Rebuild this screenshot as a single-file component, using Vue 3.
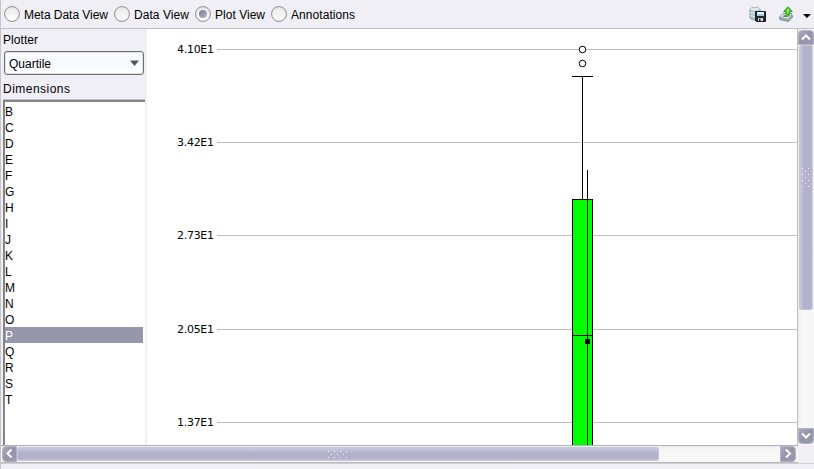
<script setup>
import { ref } from 'vue'

const views = ['Meta Data View', 'Data View', 'Plot View', 'Annotations']
const view = ref('Plot View')
const dimensions = 'BCDEFGHIJKLMNOPQRST'.split('')
const selected = ref('P')
const ticks = [
  { y: 49, label: '4.10E1' },
  { y: 142, label: '3.42E1' },
  { y: 235, label: '2.73E1' },
  { y: 329, label: '2.05E1' },
  { y: 422, label: '1.37E1' }
]
</script>

<template>
  <div class="window">
    <header class="toolbar">
      <button v-for="(v, i) in views" :key="v" :class="['view', 'view-' + i]" @click="view = v">
        <span class="radio"><span v-if="view === v" class="dot"></span></span>
        <svg class="view-label" width="94" height="18"><text x="0" y="13" :textLength="[84, 55, 50, 64][i]">{{ v }}</text></svg>
      </button>
      <div class="actions">
        <svg class="save" width="18" height="18" viewBox="0 0 18 18">
          <path d="M1 3.500Q1 1.500 6 1.500T11 3.500V12Q10 14 6 14T1 12Z" fill="#b4c6d0" stroke="#8c9ea8" />
          <ellipse cx="6" cy="3" rx="4.500" ry="1.500" fill="#dfe9ee" />
          <path d="M1.500 6.500Q5 8 10.500 6.500M1.500 9.500Q4 11 7 10.500" fill="none" stroke="#e4edf1" />
          <path d="M6.500 5.500H16.500V15.500H7.500L6.500 14.500Z" fill="#242b35" stroke="#161c24" />
          <path d="M8 6H15V10H8Z" fill="#a9cbe8" /><path d="M8 6H15V8H8Z" fill="#e9f3fa" />
          <path d="M9 12H14V15H9Z" fill="#d8dadd" /><path d="M10 12.500H11.500V15H10Z" fill="#273039" />
        </svg>
        <svg class="export" width="16" height="17" viewBox="0 0 16 17">
          <path d="M1.500 11L5 7.500H13.500L14.500 11L10.500 15.500L2 13.500Z" fill="#9fadb7" stroke="#7b8c97" />
          <path d="M2 10.500L5 8H13.500L10 12.500Z" fill="#e2eaef" />
          <path d="M4 10.500L6 9H12L10 11Z" fill="#8796a0" />
          <path d="M6.500 10.500Q8.500 9.500 8 5.500H5.500L10 .7L14.200 5.500H12Q12.500 9.500 9 10.500Z" fill="#50c529" stroke="#3c9f2a" />
          <path d="M8.500 4.500L10 2.500L11 4.500L10 8Z" fill="#9bea64" />
        </svg>
        <svg class="more" width="8" height="4"><path d="M0 0H8L4 4Z" /></svg>
      </div>
    </header>

    <main class="content">
      <aside class="sidebar">
        <svg class="caption" width="100" height="16"><text x="0" y="12" textLength="35">Plotter</text></svg>
        <div class="select">
          <svg width="80" height="16"><text x="0" y="13" textLength="42">Quartile</text></svg>
          <svg class="caret" width="9" height="6"><path d="M0 .5H9L4.500 6Z" fill="#555" /></svg>
        </div>
        <svg class="caption second" width="100" height="16"><text x="0" y="12" textLength="67">Dimensions</text></svg>
        <ul class="list">
          <li v-for="d in dimensions" :key="d" :class="{ selected: selected === d }" @click="selected = d">{{ d }}</li>
        </ul>
      </aside>

      <svg class="plot" width="650" height="416" viewBox="147 29 650 416">
        <g v-for="t in ticks" :key="t.label">
          <text class="tick" x="177" :y="t.y + 4" textLength="37">{{ t.label }}</text>
          <rect x="217" :y="t.y" width="580" height="1" fill="#bfbfbf" />
        </g>
        <rect x="572.500" y="199.500" width="20" height="260" fill="#0f0" stroke="#000" shape-rendering="crispEdges" />
        <g shape-rendering="crispEdges">
          <rect x="572" y="76" width="21" height="1" />
          <rect x="582" y="76" width="1" height="123" />
          <rect x="587" y="170" width="1" height="275" />
          <rect x="572" y="335" width="21" height="1" />
          <rect x="585" y="339" width="5" height="5" />
        </g>
        <circle cx="582.500" cy="49.500" r="3.300" fill="#fff" stroke="#000" />
        <circle cx="582.500" cy="63.500" r="3.300" fill="#fff" stroke="#000" />
      </svg>

      <div class="vbar">
        <div class="arrow up"><svg width="16" height="15"><path d="M4 9.500L8 5.500L12 9.500" /></svg></div>
        <div class="thumb">
          <svg width="8" height="20" fill="#f4f4fc"><template v-for="r in 7" :key="r"><rect v-for="c in (r % 2 ? 2 : 1)" :key="c" :x="r % 2 ? (c - 1) * 6 : 3" :y="(r - 1) * 3" width="1" height="1" /></template></svg>
        </div>
        <div class="arrow down"><svg width="16" height="15"><path d="M4 5.500L8 9.500L12 5.500" /></svg></div>
      </div>
    </main>

    <footer class="hbar">
      <div class="arrow left"><svg width="15" height="15"><path d="M9.500 3.500L5.500 7.500L9.500 11.500" /></svg></div>
      <div class="thumb">
        <svg width="20" height="7" fill="#f4f4fc"><template v-for="c in 7" :key="c"><rect v-for="r in (c % 2 ? 2 : 1)" :key="r" :x="(c - 1) * 3" :y="c % 2 ? (r - 1) * 6 : 3" width="1" height="1" /></template></svg>
      </div>
      <div class="arrow right"><svg width="15" height="15"><path d="M6 3.500L10 7.500L6 11.500" /></svg></div>
    </footer>
    <div class="status"></div>
  </div>
</template>

<style>
body { margin: 0; overflow: hidden; }
</style>

<style scoped>
* { box-sizing: border-box; }
svg { display: block; flex: none; }
.window { width: 814px; height: 469px; background: #efeff5; color: #000; font: 12px/16px "Liberation Sans", Arial, sans-serif; display: flex; flex-direction: column; overflow: hidden; border-left: 1px solid #c3c5ca; }
.toolbar { height: 29px; flex: none; display: flex; align-items: flex-start; border-bottom: 1px solid #bfbfbf; padding: 6px 3px 0 3px; }
.view { border: 0; padding: 0; background: none; color: #000; display: flex; gap: 4px; font: inherit; flex: none; }
.view-0 { width: 110px; }
.view-1 { width: 81px; }
.view-2 { width: 76px; }
.view-3 { width: 95px; }
.view-label { width: auto; flex: 1; min-width: 0; overflow: visible; }
.radio { width: 16px; height: 16px; flex: none; border: 1px solid #979797; border-radius: 50%; background: linear-gradient(#e9e9e9, #fff); display: flex; align-items: center; justify-content: center; box-shadow: inset 0 0 1px #aaa; }
.dot { width: 8px; height: 8px; border-radius: 50%; background: linear-gradient(135deg, #777990, #b5b6cf); }
.actions { margin-left: auto; display: flex; align-items: flex-start; }
.save { margin-right: 11px; }
.export { margin-right: 9px; }
.more { margin-top: 8px; }
.content { height: 416px; flex: none; display: flex; }
.sidebar { width: 146px; flex: none; padding: 3px 2px 0; display: flex; flex-direction: column; }
.caption { flex: none; }
.select { width: 140px; height: 24px; flex: none; margin-top: 3px; margin-left: 1px; padding: 0 4px; border: 1px solid #6f6f6f; border-radius: 3px; background: linear-gradient(#fafafe, #f7faff 60%, #fff); box-shadow: inset 0 0 0 1px #dedfe7; display: flex; align-items: center; justify-content: space-between; }
.second { margin-top: 6px; }
.list { list-style: none; margin: 3px 0 0; padding: 1px 2px 0 0; flex: 1; min-height: 0; overflow: hidden; width: 142px; background: #fff; border-top: 2px solid #858585; border-left: 2px solid #858585; box-shadow: 0 -1px #bdbdc1; }
.list li { height: 16px; line-height: 18px; }
.list .selected { background: #9797ab; color: #fff; }
.plot { background: #fff; }
.tick { font: 11px "DejaVu Sans", sans-serif; }
.vbar { width: 17px; border-left: 1px solid #bfbfb8; background: linear-gradient(90deg, #eeeef2, #f7f7f7 4px); display: flex; flex-direction: column; padding: 1px 0; }
.arrow { flex: none; background: linear-gradient(135deg, #aaaac0, #9494aa 45%, #9999af); border: 1px solid #b2b2c8; }
.arrow svg { margin: -1px; fill: none; stroke: #fff; stroke-width: 2; }
.up, .down { width: 16px; height: 15px; }
.up { border-radius: 4px 4px 0 0; }
.down { height: 16px; margin-top: auto; border-radius: 0 0 4px 4px; }
.thumb { flex: none; display: flex; align-items: center; justify-content: center; border: 1px solid #c7c7dc; border-radius: 2px; }
.vbar .thumb { width: 14px; height: 265px; margin-left: 1px; background: linear-gradient(90deg, #c9c9de, #b2b2ca 4px, #b1b1c8 11px, #c7c7dd); }
.hbar { height: 18px; width: 797px; flex: none; border-top: 1px solid #b2b2b2; border-bottom: 1px solid #b8b8b8; background: linear-gradient(#eeeef2, #f7f7f7 4px); display: flex; align-items: center; padding: 0 2px 0 1px; }
.left, .right { width: 15px; height: 16px; }
.left { border-radius: 4px 0 0 4px; }
.right { width: 16px; margin-left: auto; border-radius: 0 4px 4px 0; }
.hbar .thumb { width: 642px; height: 14px; background: linear-gradient(#c9c9de, #b2b2ca 5px, #b1b1c8 11px, #c7c7dd); }
.status { border-bottom: 1px solid #d0d0d4; height: 1px; }
</style>
